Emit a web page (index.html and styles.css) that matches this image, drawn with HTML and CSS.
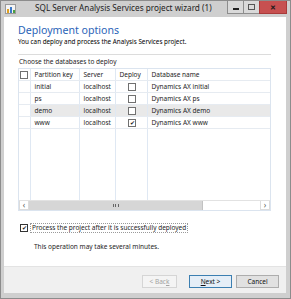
FILE: index.html
```html
<!DOCTYPE html>
<html lang="en">
<head>
    <meta charset="UTF-8">
    <title>SQL Server Analysis Services project wizard</title>
    <link rel="stylesheet" href="styles.css">
</head>
<body>
    <div class="window">
        <div class="titlebar">
            <svg class="app-icon" width="11" height="10" viewBox="0 0 11 10">
                <rect x="0.5" y="0.5" width="10" height="9" fill="#f4f4f4" stroke="#9a9a9a"/>
                <rect x="2" y="5" width="2" height="4" fill="#e0a020"/>
                <rect x="5" y="3" width="2" height="6" fill="#3a78c8"/>
                <rect x="8" y="6" width="2" height="3" fill="#4aa040"/>
            </svg>
            <div class="title">SQL Server Analysis Services project wizard (1)</div>
            <div class="controls">
                <span class="ctl"><span class="min-bar"></span></span>
                <span class="ctl"><span class="max-box"></span></span>
                <span class="ctl close">&#x2715;</span>
            </div>
        </div>
        <div class="client">
            <div class="page">
                <div class="header">
                    <h1>Deployment options</h1>
                    <p class="subtitle">You can deploy and process the Analysis Services project.</p>
                </div>
                <p class="prompt">Choose the databases to deploy</p>
                <div class="grid">
                    <table>
                        <colgroup>
                            <col class="c-check"><col class="c-key"><col class="c-server"><col class="c-deploy"><col>
                        </colgroup>
                        <tr class="head">
                            <td class="cell-check"><span class="cb"></span></td>
                            <td>Partition key</td>
                            <td>Server</td>
                            <td>Deploy</td>
                            <td>Database name</td>
                        </tr>
                        <tr>
                            <td></td><td>initial</td><td>localhost</td>
                            <td class="cell-deploy"><span class="cb"></span></td>
                            <td>Dynamics AX initial</td>
                        </tr>
                        <tr>
                            <td></td><td>ps</td><td>localhost</td>
                            <td class="cell-deploy"><span class="cb"></span></td>
                            <td>Dynamics AX ps</td>
                        </tr>
                        <tr class="selected">
                            <td></td><td>demo</td><td>localhost</td>
                            <td class="cell-deploy"><span class="cb"></span></td>
                            <td>Dynamics AX demo</td>
                        </tr>
                        <tr>
                            <td></td><td>www</td><td>localhost</td>
                            <td class="cell-deploy"><span class="cb checked">&#x2714;</span></td>
                            <td>Dynamics AX www</td>
                        </tr>
                        <tr class="filler">
                            <td></td><td></td><td></td><td></td><td></td>
                        </tr>
                    </table>
                    <div class="hscroll">
                        <span class="arrow">&#x2039;</span>
                        <span class="thumb"><span class="grip"></span></span>
                        <span class="track"></span>
                        <span class="arrow">&#x203A;</span>
                    </div>
                </div>
                <div class="process">
                    <span class="cb checked">&#x2714;</span>
                    <span class="focus">Process the project after it is successfully deployed</span>
                </div>
                <p class="note">This operation may take several minutes.</p>
            </div>
            <div class="footer">
                <button class="btn disabled">&lt; Bac<u>k</u></button>
                <button class="btn default"><u>N</u>ext &gt;</button>
                <button class="btn">Cancel</button>
            </div>
        </div>
    </div>
</body>
</html>
```

FILE: styles.css
```css
body {
    margin: 0;
    font-family: "Noto Sans", "Open Sans", sans-serif;
    color: #1e1e1e;
}
.window {
    width: 291px;
    height: 299px;
    box-sizing: border-box;
    background: #cfcfcf;
    border: 1px solid #8c8c8c;
    display: flex;
    flex-direction: column;
}
.titlebar {
    height: 16px;
    display: flex;
    align-items: flex-start;
}
.app-icon {
    margin: 3px 0 0 4px;
}
.title {
    flex: 1;
    margin: 2px 0 0 19px;
    font-size: 8.2px;
    line-height: 10px;
    color: #222;
    white-space: nowrap;
}
.controls {
    display: flex;
    margin-right: 3px;
}
.ctl {
    width: 15px;
    height: 12px;
    border: 1px solid #8d8d8d;
    border-top: none;
    margin-left: -1px;
    background: #d9d9d9;
    display: flex;
    align-items: center;
    justify-content: center;
}
.min-bar {
    width: 6px;
    height: 2px;
    background: #222;
    margin-top: 3px;
}
.max-box {
    width: 5px;
    height: 4px;
    border: 1px solid #555;
}
.ctl.close {
    width: 26px;
    background: #c75050;
    border-color: #a83a3a;
    color: #1a1a1a;
    font-size: 7px;
    font-weight: bold;
}
.client {
    flex: 1;
    margin: 0 4px 5px 3px;
    background: #fff;
    display: flex;
    flex-direction: column;
}
.page {
    flex: 1;
    padding: 0 15px 0 14px;
}
.header {
    border-bottom: 1px solid #dcdcdc;
    padding: 7px 0 8px;
}
h1 {
    margin: 0;
    font-weight: normal;
    font-size: 10.6px;
    line-height: 12px;
    color: #2b64b8;
}
.subtitle {
    margin: 2px 0 0;
    font-size: 6.3px;
    line-height: 8px;
    color: #000;
}
.prompt {
    margin: 3px 0 0 1px;
    font-size: 6.5px;
    line-height: 8px;
}
.grid {
    margin-top: 2px;
    width: 253px;
    height: 143px;
    box-sizing: border-box;
    border: 1px solid #dbe4ef;
    display: flex;
    flex-direction: column;
}
table {
    border-collapse: collapse;
    table-layout: fixed;
    width: 251px;
    flex: 1;
    font-size: 6.5px;
}
.c-check { width: 11px; }
.c-key { width: 49px; }
.c-server { width: 36px; }
.c-deploy { width: 32px; }
td {
    height: 11px;
    padding: 0 0 0 4px;
    border-left: 1px solid #dfe8f3;
    border-bottom: 1px solid #e6ebf1;
    white-space: nowrap;
    overflow: hidden;
    line-height: 10px;
}
td:first-child {
    border-left: none;
}
tr.selected td + td {
    background: #e9e9e9;
}
tr.filler td {
    height: auto;
    border-bottom: none;
}
.cell-check, .cell-deploy {
    padding: 0;
    text-align: center;
}
.cb {
    display: inline-block;
    width: 6px;
    height: 6px;
    border: 1px solid #707070;
    background: #fff;
    vertical-align: middle;
    font-size: 6px;
    line-height: 6px;
    text-align: center;
    color: #222;
}
.cell-deploy .cb {
    margin-left: 2px;
}
.hscroll {
    height: 10px;
    display: flex;
    border-top: 1px solid #e2e2e2;
    box-sizing: border-box;
}
.arrow {
    width: 10px;
    border: 1px solid #dcdcdc;
    border-top: none;
    box-sizing: border-box;
    font-size: 8px;
    line-height: 8px;
    text-align: center;
    color: #555;
}
.thumb {
    width: 173px;
    background: #d6d6d6;
    border-right: 1px solid #c2c2c2;
    display: flex;
    align-items: center;
    justify-content: center;
}
.grip {
    width: 4px;
    height: 3px;
    border-left: 1px solid #666;
    border-right: 1px solid #666;
    background: linear-gradient(#666, #666) center / 1px 3px no-repeat;
}
.track {
    flex: 1;
}
.process {
    display: flex;
    align-items: center;
    margin: 12px 0 0 2px;
    font-size: 6.5px;
    line-height: 8px;
}
.process .cb {
    border-color: #333;
}
.focus {
    margin-left: 2px;
    padding: 0 1px;
    border: 1px dotted #9a9a9a;
}
.note {
    margin: 10px 0 0 16px;
    font-size: 6.5px;
    line-height: 8px;
}
.footer {
    height: 27px;
    box-sizing: border-box;
    background: #f0f0f0;
    border-top: 1px solid #e3e3e3;
    display: flex;
    align-items: flex-start;
    padding: 8px 7px 0 0;
    justify-content: flex-end;
    gap: 4px;
}
.btn {
    font-family: inherit;
    font-size: 6.5px;
    height: 13px;
    width: 43px;
    padding: 0;
    background: #e1e1e1;
    border: 1px solid #adadad;
    color: #111;
}
.btn.default {
    border-color: #3c7fb1;
    background: #e5eef7;
}
.btn.disabled {
    width: 35px;
    margin-right: 8px;
    background: #f4f4f4;
    border-color: #d5d5d5;
    color: #a3a3a3;
}
```
